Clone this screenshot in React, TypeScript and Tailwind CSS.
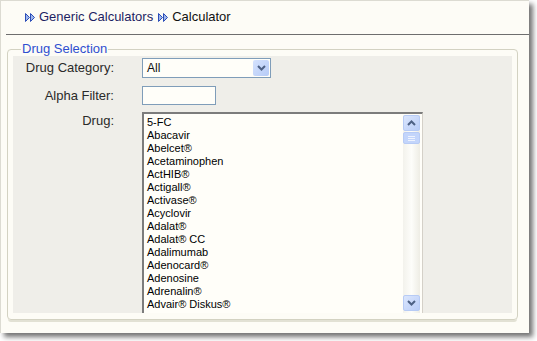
import { ReactNode } from "react";

const drugs = [
  "5-FC",
  "Abacavir",
  "Abelcet®",
  "Acetaminophen",
  "ActHIB®",
  "Actigall®",
  "Activase®",
  "Acyclovir",
  "Adalat®",
  "Adalat® CC",
  "Adalimumab",
  "Adenocard®",
  "Adenosine",
  "Adrenalin®",
  "Advair® Diskus®",
];

function Crumb() {
  return (
    <svg width="10" height="9" viewBox="0 0 10 9" className="shrink-0">
      <path d="M0.5 0.5 L4.5 4.5 L0.5 8.5 Z" fill="#9fb6ea" stroke="#2b4db8" strokeWidth="1" />
      <path d="M5.5 0.5 L9.5 4.5 L5.5 8.5 Z" fill="#9fb6ea" stroke="#2b4db8" strokeWidth="1" />
    </svg>
  );
}

function Chevron({ up }: { up?: boolean }) {
  return (
    <svg width="9" height="6" viewBox="0 0 9 6">
      <path
        d={up ? "M1 5 L4.5 1.5 L8 5" : "M1 1 L4.5 4.5 L8 1"}
        fill="none"
        stroke="#4d6185"
        strokeWidth="2"
      />
    </svg>
  );
}

function XpButton({ children }: { children: ReactNode }) {
  return (
    <div className="flex items-center justify-center h-[16px] rounded-[2px] border border-[#b7cbf5] bg-gradient-to-br from-[#dbe6fd] to-[#b9cdf8]">
      {children}
    </div>
  );
}

function Label({ children, className = "" }: { children: ReactNode; className?: string }) {
  return <div className={`text-right text-[13px] text-[#2a2a2a] leading-[16px] ${className}`}>{children}</div>;
}

export default function App() {
  return (
    <div className="w-[537px] h-[341px] bg-white" style={{ fontFamily: '"Liberation Sans", Arial, sans-serif' }}>
      <div className="w-[529px] h-[333px] bg-[#fdfcf6] border-l border-t border-[#dcdbd2] shadow-[4px_4px_5px_rgba(0,0,0,0.55)] flex flex-col">
        <div className="flex items-center gap-[4px] pl-[24px] pt-[8px] h-[24px] text-[13px] leading-[16px]">
          <Crumb />
          <span className="text-[#1e1f63]">Generic Calculators</span>
          <span className="ml-[1px]">
            <Crumb />
          </span>
          <span className="text-[#111]">Calculator</span>
        </div>

        <div className="ml-[5px] mt-[9px] h-px bg-[#6e6e6e]" />

        <fieldset className="ml-[6px] mt-[6px] w-[511px] border border-[#d3d2c2] rounded-[4px] px-[5px] pb-[6px] shadow-[0_3px_0_-1px_#e2e1d4]">
          <legend className="ml-[8px] px-px text-[13px] leading-[16px] text-[#2f4fd0]">Drug Selection</legend>
          <div className="h-[257px] -mt-px bg-[#efeee9] pt-[2px] grid grid-cols-[101px_1fr] gap-x-[28px] content-start overflow-hidden">
            <Label className="pt-[2px]">Drug Category:</Label>
            <div className="flex w-[129px] h-[20px] border border-[#7f9db9] bg-[#fffef9]">
              <span className="flex-1 pl-[4px] text-[12px] leading-[18px] text-[#111]">All</span>
              <div className="w-[16px] m-px">
                <div className="flex items-center justify-center h-full rounded-[2px] bg-gradient-to-br from-[#d5e2fd] to-[#b6cbf7]">
                  <Chevron />
                </div>
              </div>
            </div>

            <Label className="mt-[8px] pt-[2px]">Alpha Filter:</Label>
            <div className="mt-[8px] w-[74px] h-[19px] border border-[#7f9db9] bg-[#fffef9]" />

            <Label className="mt-[7px] pt-[1px]">Drug:</Label>
            <div className="mt-[7px] w-[281px] h-[203px] flex border-l-2 border-t-2 border-[#7c7c7c] border-r border-b border-r-[#d4d0c8] border-b-[#d4d0c8] bg-[#fffef9]">
              <div className="flex-1 pl-[3px] pt-[2px] overflow-hidden">
                {drugs.map((d) => (
                  <div key={d} className="text-[11px] leading-[13px] text-black whitespace-nowrap">
                    {d}
                  </div>
                ))}
              </div>
              <div className="w-[17px] mt-px mr-[2px] flex flex-col bg-gradient-to-r from-[#f3f2ec] via-[#fdfdfa] to-[#eeede5]">
                <XpButton>
                  <Chevron up />
                </XpButton>
                <div className="mt-px h-[12px] rounded-[2px] border border-[#b7cbf5] bg-[#c3d5fb] flex flex-col items-center justify-center gap-px">
                  <div className="w-[7px] h-px bg-[#eef3fe]" />
                  <div className="w-[7px] h-px bg-[#eef3fe]" />
                  <div className="w-[7px] h-px bg-[#eef3fe]" />
                </div>
                <div className="flex-1" />
                <XpButton>
                  <Chevron />
                </XpButton>
                <div className="h-[3px]" />
              </div>
            </div>
          </div>
        </fieldset>
      </div>
    </div>
  );
}
